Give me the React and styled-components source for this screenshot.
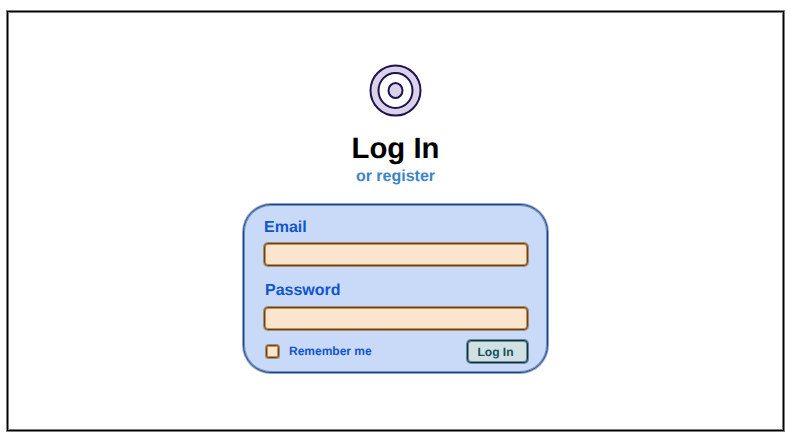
import React from 'react';
import styled, { createGlobalStyle, css } from 'styled-components';

const GlobalStyle = createGlobalStyle`
  *, *::before, *::after { box-sizing: border-box; }
  body {
    margin: 0;
    background: #fff;
    font-family: "Liberation Sans", Arial, Helvetica, sans-serif;
    font-weight: 700;
    text-rendering: geometricPrecision;
  }
`;

/* A thin solid line with a softer line on both of its sides. */
const outline = (color, soft) => css`
  border: 1px solid ${color};
  box-shadow: 0 0 0 1px ${soft}, inset 0 0 0 1px ${soft};
`;

const Page = styled.div`
  height: 438px;
  padding: 11px 7px 7px;
`;

const Frame = styled.main`
  width: 777px;
  height: 420px;
  display: flex;
  flex-direction: column;
  align-items: center;
  padding-top: 52px;
  ${outline('#000', 'rgba(0, 0, 0, 0.5)')}
`;

const Logo = styled.svg`
  display: block;
  width: 53px;
  height: 53px;
  flex: none;
`;

const Title = styled.h1`
  margin: 15px 0 0;
  font-size: 29.3px;
  line-height: 33px;
  color: #000;
`;

const RegisterLink = styled.a`
  margin-top: 3px;
  font-size: 16px;
  line-height: 18px;
  color: #3d85c6;
  text-decoration: none;
`;

const Card = styled.form`
  width: 305px;
  height: 169px;
  margin-top: 18px;
  padding: 14px 19px 0 20px;
  border-radius: 28px;
  background: #c9daf8;
  ${outline('#1c4587', 'rgba(28, 69, 135, 0.5)')}
`;

const Field = styled.div`
  display: flex;
  flex-direction: column;
  gap: ${({ $gap }) => $gap}px;
  margin-bottom: ${({ $after }) => $after}px;
`;

const Label = styled.label`
  padding-left: ${({ $indent }) => $indent || 0}px;
  font-size: 16px;
  line-height: 18px;
  color: #1155cc;
`;

const Input = styled.input`
  width: 264px;
  height: 23px;
  padding: 0 6px;
  border-radius: 4px;
  background: #fce5cd;
  outline: none;
  ${outline('#783f04', 'rgba(120, 63, 4, 0.5)')}
`;

const Actions = styled.div`
  display: flex;
  align-items: center;
  justify-content: space-between;
`;

const Remember = styled.label`
  display: flex;
  align-items: center;
  gap: 10px;
  padding-left: 2px;
  color: #1155cc;
`;

const RememberText = styled.span`
  padding-bottom: 2px;
  font-size: 12px;
  line-height: 14px;
`;

const Checkbox = styled.input`
  appearance: none;
  width: 13px;
  height: 13px;
  margin: 0;
  border-radius: 2.5px;
  background: #fce5cd;
  ${outline('#783f04', 'rgba(120, 63, 4, 0.5)')}
`;

const Button = styled.button`
  width: 61px;
  height: 23px;
  padding: 0 4px 0 0;
  border-radius: 4px;
  background: #d0e0e3;
  color: #134f5c;
  font: inherit;
  font-size: 12px;
  line-height: 14px;
  text-rendering: geometricPrecision;
  ${outline('#0c343d', 'rgba(12, 52, 61, 0.5)')}
`;

export default function App() {
  return (
    <>
      <GlobalStyle />
      <Page>
        <Frame>
          <Logo viewBox="0 0 53 53" stroke="#20124d" strokeWidth="2" aria-hidden="true">
            <circle cx="26.5" cy="26.5" r="25" fill="#d9d2e9" />
            <ellipse cx="26.5" cy="26.5" rx="17" ry="17.5" fill="#fff" />
            <ellipse cx="26.5" cy="26.5" rx="7" ry="7.5" fill="#d9d2e9" />
          </Logo>
          <Title>Log In</Title>
          <RegisterLink>or register</RegisterLink>
          <Card>
            <Field $gap={6} $after={16}>
              <Label htmlFor="email">Email</Label>
              <Input id="email" type="email" />
            </Field>
            <Field $gap={7} $after={10}>
              <Label htmlFor="password" $indent={1}>Password</Label>
              <Input id="password" type="password" />
            </Field>
            <Actions>
              <Remember>
                <Checkbox type="checkbox" />
                <RememberText>Remember me</RememberText>
              </Remember>
              <Button type="button">Log In</Button>
            </Actions>
          </Card>
        </Frame>
      </Page>
    </>
  );
}
